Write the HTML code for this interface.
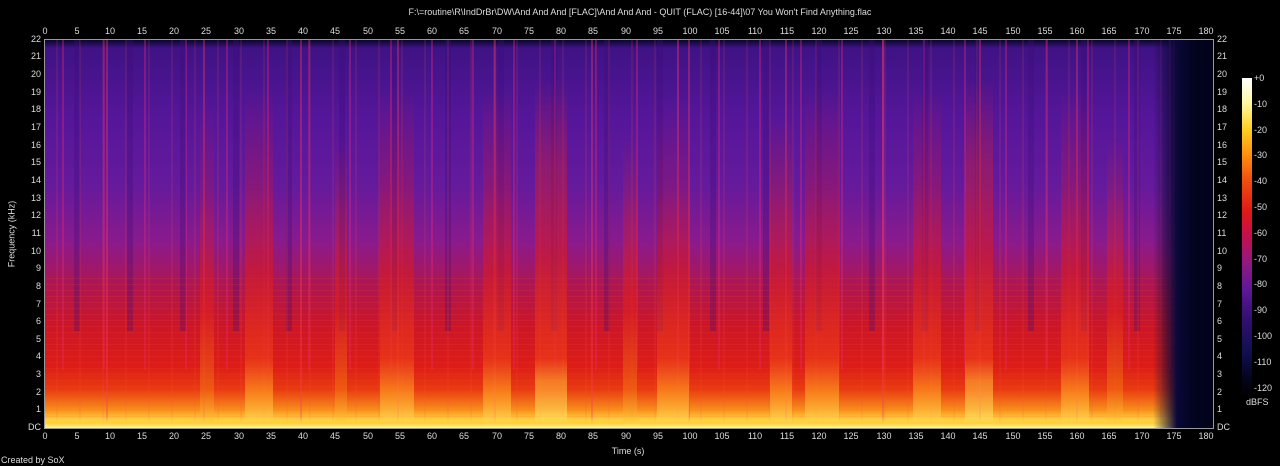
<!DOCTYPE html>
<html><head><meta charset="utf-8"><style>
html,body{margin:0;padding:0;background:#000;width:1280px;height:466px;overflow:hidden;position:relative;font-family:"Liberation Sans","DejaVu Sans",sans-serif;font-size:9px;color:#ddd}
.t{position:absolute;white-space:nowrap;line-height:9px}
.xt{transform:translateX(-50%)}
#plot{position:absolute;left:45px;top:40px;width:1168px;height:388px;overflow:hidden;
background:
linear-gradient(to bottom,rgba(5,5,40,.9) 0px,rgba(5,5,40,0) 8px),
linear-gradient(to bottom,#3c1282 0%,#55169a 20%,#661a9c 38%,#8a1a8c 52%,#b0164e 64%,#cc1628 74%,#dc1c18 84%,#e83a10 90%,#f58a18 95%,#ffd040 98%,#fff070 100%)}
.st{position:absolute;left:0;top:0;width:100%;height:100%}
.hot{position:absolute;bottom:0;opacity:.6}
#fade{position:absolute;right:0;top:0;height:100%;width:60px;background:linear-gradient(to right,rgba(10,5,50,0) 0px,#0a0838 24px,#020420 40px,#020218 60px)}
.ax{position:absolute;background:#999}
</style></head><body>
<div class="t xt" style="left:640px;top:8px">F:\=routine\R\IndDrBr\DW\And And And [FLAC]\And And And - QUIT (FLAC) [16-44]\07 You Won't Find Anything.flac</div>
<div id="plot">
<div class="st" style="background:repeating-linear-gradient(to right,rgba(0,0,0,0) 0 17px,rgba(230,40,120,.35) 17px 19px,rgba(0,0,0,0) 19px 41px);height:85%"></div>
<div class="st" style="background:repeating-linear-gradient(to right,rgba(0,0,0,0) 0 29px,rgba(60,10,120,.3) 29px 35px,rgba(0,0,0,0) 35px 53px);height:75%"></div>
<div class="st" style="background:repeating-linear-gradient(to right,rgba(0,0,0,0) 0 61px,rgba(250,60,90,.35) 61px 63px,rgba(0,0,0,0) 63px 97px)"></div>
<div class="st" style="background:repeating-linear-gradient(to right,rgba(0,0,0,0) 0 11px,rgba(255,80,60,.12) 11px 13px,rgba(0,0,0,0) 13px 23px)"></div>
<div class="st" style="background:repeating-linear-gradient(to bottom,rgba(0,0,0,0) 0 5px,rgba(255,90,40,.12) 5px 6px);top:60%;height:40%"></div>
<div class="hot" style="left:155px;width:14px;height:100%;background:linear-gradient(to top,#ffd040 0%,#f07010 10%,#e0201e 30%,rgba(200,20,60,.4) 60%,rgba(0,0,0,0) 85%)"></div>
<div class="hot" style="left:200px;width:28px;height:100%;background:linear-gradient(to top,#ffe060 0%,#ffa020 10%,#f04018 18%,#d81a24 40%,rgba(200,20,60,.5) 65%,rgba(0,0,0,0) 88%)"></div>
<div class="hot" style="left:290px;width:12px;height:100%;background:linear-gradient(to top,#ffd040 0%,#f07010 10%,#e0201e 30%,rgba(0,0,0,0) 75%)"></div>
<div class="hot" style="left:335px;width:34px;height:100%;background:linear-gradient(to top,#ffe060 0%,#ffa020 10%,#f04018 18%,#d81a24 40%,rgba(200,20,60,.5) 65%,rgba(0,0,0,0) 88%)"></div>
<div class="hot" style="left:438px;width:28px;height:100%;background:linear-gradient(to top,#ffe060 0%,#ffa020 10%,#f04018 18%,#d81a24 40%,rgba(200,20,60,.5) 65%,rgba(0,0,0,0) 88%)"></div>
<div class="hot" style="left:490px;width:32px;height:100%;background:linear-gradient(to top,#fff070 0%,#ffb030 12%,#f04018 18%,#d81a24 45%,rgba(220,30,40,.6) 68%,rgba(0,0,0,0) 90%)"></div>
<div class="hot" style="left:578px;width:14px;height:100%;background:linear-gradient(to top,#ffd040 0%,#f07010 10%,#e0201e 30%,rgba(0,0,0,0) 75%)"></div>
<div class="hot" style="left:612px;width:32px;height:100%;background:linear-gradient(to top,#ffe060 0%,#ffa020 10%,#f04018 18%,#d81a24 40%,rgba(200,20,60,.4) 62%,rgba(0,0,0,0) 85%)"></div>
<div class="hot" style="left:725px;width:22px;height:100%;background:linear-gradient(to top,#ffe060 0%,#ffa020 10%,#f04018 18%,#d81a24 40%,rgba(0,0,0,0) 80%)"></div>
<div class="hot" style="left:760px;width:34px;height:100%;background:linear-gradient(to top,#ffe060 0%,#ffa020 10%,#f04018 18%,#d81a24 40%,rgba(200,20,60,.5) 65%,rgba(0,0,0,0) 88%)"></div>
<div class="hot" style="left:868px;width:28px;height:100%;background:linear-gradient(to top,#ffe060 0%,#ffa020 10%,#f04018 18%,#d81a24 40%,rgba(200,20,60,.5) 65%,rgba(0,0,0,0) 88%)"></div>
<div class="hot" style="left:920px;width:28px;height:100%;background:linear-gradient(to top,#fff070 0%,#ffb030 12%,#f04018 18%,#d81a24 45%,rgba(220,30,40,.6) 68%,rgba(0,0,0,0) 90%)"></div>
<div class="hot" style="left:1016px;width:28px;height:100%;background:linear-gradient(to top,#ffe060 0%,#ffa020 10%,#f04018 18%,#d81a24 40%,rgba(200,20,60,.5) 65%,rgba(0,0,0,0) 88%)"></div>
<div class="hot" style="left:1062px;width:16px;height:100%;background:linear-gradient(to top,#ffd040 0%,#f07010 10%,#e0201e 30%,rgba(0,0,0,0) 75%)"></div>
<div class="st" style="top:auto;bottom:0;height:12px;background:linear-gradient(to top,#fff890,#ffd040 40%,rgba(255,160,32,0))"></div>
<div id="fade"></div>
</div>
<div class="ax" style="left:44px;top:39px;width:1px;height:390px"></div>
<div class="ax" style="left:1213px;top:39px;width:1px;height:390px"></div>
<div class="ax" style="left:44px;top:39px;width:1170px;height:1px"></div>
<div class="ax" style="left:44px;top:428px;width:1170px;height:1px"></div>
<div class="t xt" style="left:45px;top:27px">0</div><div class="t xt" style="left:77px;top:27px">5</div><div class="t xt" style="left:110px;top:27px">10</div><div class="t xt" style="left:142px;top:27px">15</div><div class="t xt" style="left:174px;top:27px">20</div><div class="t xt" style="left:206px;top:27px">25</div><div class="t xt" style="left:239px;top:27px">30</div><div class="t xt" style="left:271px;top:27px">35</div><div class="t xt" style="left:303px;top:27px">40</div><div class="t xt" style="left:335px;top:27px">45</div><div class="t xt" style="left:368px;top:27px">50</div><div class="t xt" style="left:400px;top:27px">55</div><div class="t xt" style="left:432px;top:27px">60</div><div class="t xt" style="left:464px;top:27px">65</div><div class="t xt" style="left:497px;top:27px">70</div><div class="t xt" style="left:529px;top:27px">75</div><div class="t xt" style="left:561px;top:27px">80</div><div class="t xt" style="left:593px;top:27px">85</div><div class="t xt" style="left:626px;top:27px">90</div><div class="t xt" style="left:658px;top:27px">95</div><div class="t xt" style="left:690px;top:27px">100</div><div class="t xt" style="left:722px;top:27px">105</div><div class="t xt" style="left:755px;top:27px">110</div><div class="t xt" style="left:787px;top:27px">115</div><div class="t xt" style="left:819px;top:27px">120</div><div class="t xt" style="left:851px;top:27px">125</div><div class="t xt" style="left:884px;top:27px">130</div><div class="t xt" style="left:916px;top:27px">135</div><div class="t xt" style="left:948px;top:27px">140</div><div class="t xt" style="left:980px;top:27px">145</div><div class="t xt" style="left:1013px;top:27px">150</div><div class="t xt" style="left:1045px;top:27px">155</div><div class="t xt" style="left:1077px;top:27px">160</div><div class="t xt" style="left:1109px;top:27px">165</div><div class="t xt" style="left:1142px;top:27px">170</div><div class="t xt" style="left:1174px;top:27px">175</div><div class="t xt" style="left:1206px;top:27px">180</div>
<div class="t xt" style="left:45px;top:432px">0</div><div class="t xt" style="left:77px;top:432px">5</div><div class="t xt" style="left:110px;top:432px">10</div><div class="t xt" style="left:142px;top:432px">15</div><div class="t xt" style="left:174px;top:432px">20</div><div class="t xt" style="left:206px;top:432px">25</div><div class="t xt" style="left:239px;top:432px">30</div><div class="t xt" style="left:271px;top:432px">35</div><div class="t xt" style="left:303px;top:432px">40</div><div class="t xt" style="left:335px;top:432px">45</div><div class="t xt" style="left:368px;top:432px">50</div><div class="t xt" style="left:400px;top:432px">55</div><div class="t xt" style="left:432px;top:432px">60</div><div class="t xt" style="left:464px;top:432px">65</div><div class="t xt" style="left:497px;top:432px">70</div><div class="t xt" style="left:529px;top:432px">75</div><div class="t xt" style="left:561px;top:432px">80</div><div class="t xt" style="left:593px;top:432px">85</div><div class="t xt" style="left:626px;top:432px">90</div><div class="t xt" style="left:658px;top:432px">95</div><div class="t xt" style="left:690px;top:432px">100</div><div class="t xt" style="left:722px;top:432px">105</div><div class="t xt" style="left:755px;top:432px">110</div><div class="t xt" style="left:787px;top:432px">115</div><div class="t xt" style="left:819px;top:432px">120</div><div class="t xt" style="left:851px;top:432px">125</div><div class="t xt" style="left:884px;top:432px">130</div><div class="t xt" style="left:916px;top:432px">135</div><div class="t xt" style="left:948px;top:432px">140</div><div class="t xt" style="left:980px;top:432px">145</div><div class="t xt" style="left:1013px;top:432px">150</div><div class="t xt" style="left:1045px;top:432px">155</div><div class="t xt" style="left:1077px;top:432px">160</div><div class="t xt" style="left:1109px;top:432px">165</div><div class="t xt" style="left:1142px;top:432px">170</div><div class="t xt" style="left:1174px;top:432px">175</div><div class="t xt" style="left:1206px;top:432px">180</div>
<div style="position:absolute;left:0;top:0;width:41px">
<div class="t" style="right:0;top:423px">DC</div><div class="t" style="right:0;top:405px">1</div><div class="t" style="right:0;top:388px">2</div><div class="t" style="right:0;top:370px">3</div><div class="t" style="right:0;top:352px">4</div><div class="t" style="right:0;top:335px">5</div><div class="t" style="right:0;top:317px">6</div><div class="t" style="right:0;top:300px">7</div><div class="t" style="right:0;top:282px">8</div><div class="t" style="right:0;top:264px">9</div><div class="t" style="right:0;top:247px">10</div><div class="t" style="right:0;top:229px">11</div><div class="t" style="right:0;top:211px">12</div><div class="t" style="right:0;top:194px">13</div><div class="t" style="right:0;top:176px">14</div><div class="t" style="right:0;top:158px">15</div><div class="t" style="right:0;top:141px">16</div><div class="t" style="right:0;top:123px">17</div><div class="t" style="right:0;top:105px">18</div><div class="t" style="right:0;top:88px">19</div><div class="t" style="right:0;top:70px">20</div><div class="t" style="right:0;top:52px">21</div><div class="t" style="right:0;top:35px">22</div>
</div>
<div style="position:absolute;left:1217px;top:0">
<div class="t" style="left:0;top:423px">DC</div><div class="t" style="left:0;top:405px">1</div><div class="t" style="left:0;top:388px">2</div><div class="t" style="left:0;top:370px">3</div><div class="t" style="left:0;top:352px">4</div><div class="t" style="left:0;top:335px">5</div><div class="t" style="left:0;top:317px">6</div><div class="t" style="left:0;top:300px">7</div><div class="t" style="left:0;top:282px">8</div><div class="t" style="left:0;top:264px">9</div><div class="t" style="left:0;top:247px">10</div><div class="t" style="left:0;top:229px">11</div><div class="t" style="left:0;top:211px">12</div><div class="t" style="left:0;top:194px">13</div><div class="t" style="left:0;top:176px">14</div><div class="t" style="left:0;top:158px">15</div><div class="t" style="left:0;top:141px">16</div><div class="t" style="left:0;top:123px">17</div><div class="t" style="left:0;top:105px">18</div><div class="t" style="left:0;top:88px">19</div><div class="t" style="left:0;top:70px">20</div><div class="t" style="left:0;top:52px">21</div><div class="t" style="left:0;top:35px">22</div>
</div>
<div class="t" style="left:12px;top:234px;transform:translate(-50%,-50%) rotate(-90deg)">Frequency (kHz)</div>
<div class="t xt" style="left:628px;top:447px">Time (s)</div>
<div class="t" style="left:1px;top:456px">Created by SoX</div>
<div style="position:absolute;left:1242px;top:78px;width:10px;height:318px;background:linear-gradient(to bottom,#ffffff 0%,#fff8a0 8%,#ffd020 16%,#ff9010 24%,#f05010 32%,#e01818 42%,#c01050 50%,#901a80 58%,#601898 66%,#301070 76%,#101050 86%,#050520 94%,#000 100%)"></div>
<div class="t" style="left:1254px;top:74px">+0</div><div class="t" style="left:1254px;top:100px">-10</div><div class="t" style="left:1254px;top:126px">-20</div><div class="t" style="left:1254px;top:151px">-30</div><div class="t" style="left:1254px;top:177px">-40</div><div class="t" style="left:1254px;top:203px">-50</div><div class="t" style="left:1254px;top:229px">-60</div><div class="t" style="left:1254px;top:255px">-70</div><div class="t" style="left:1254px;top:280px">-80</div><div class="t" style="left:1254px;top:306px">-90</div><div class="t" style="left:1254px;top:332px">-100</div><div class="t" style="left:1254px;top:358px">-110</div><div class="t" style="left:1254px;top:384px">-120</div>
<div class="t" style="left:1246px;top:398px">dBFS</div>
</body></html>
